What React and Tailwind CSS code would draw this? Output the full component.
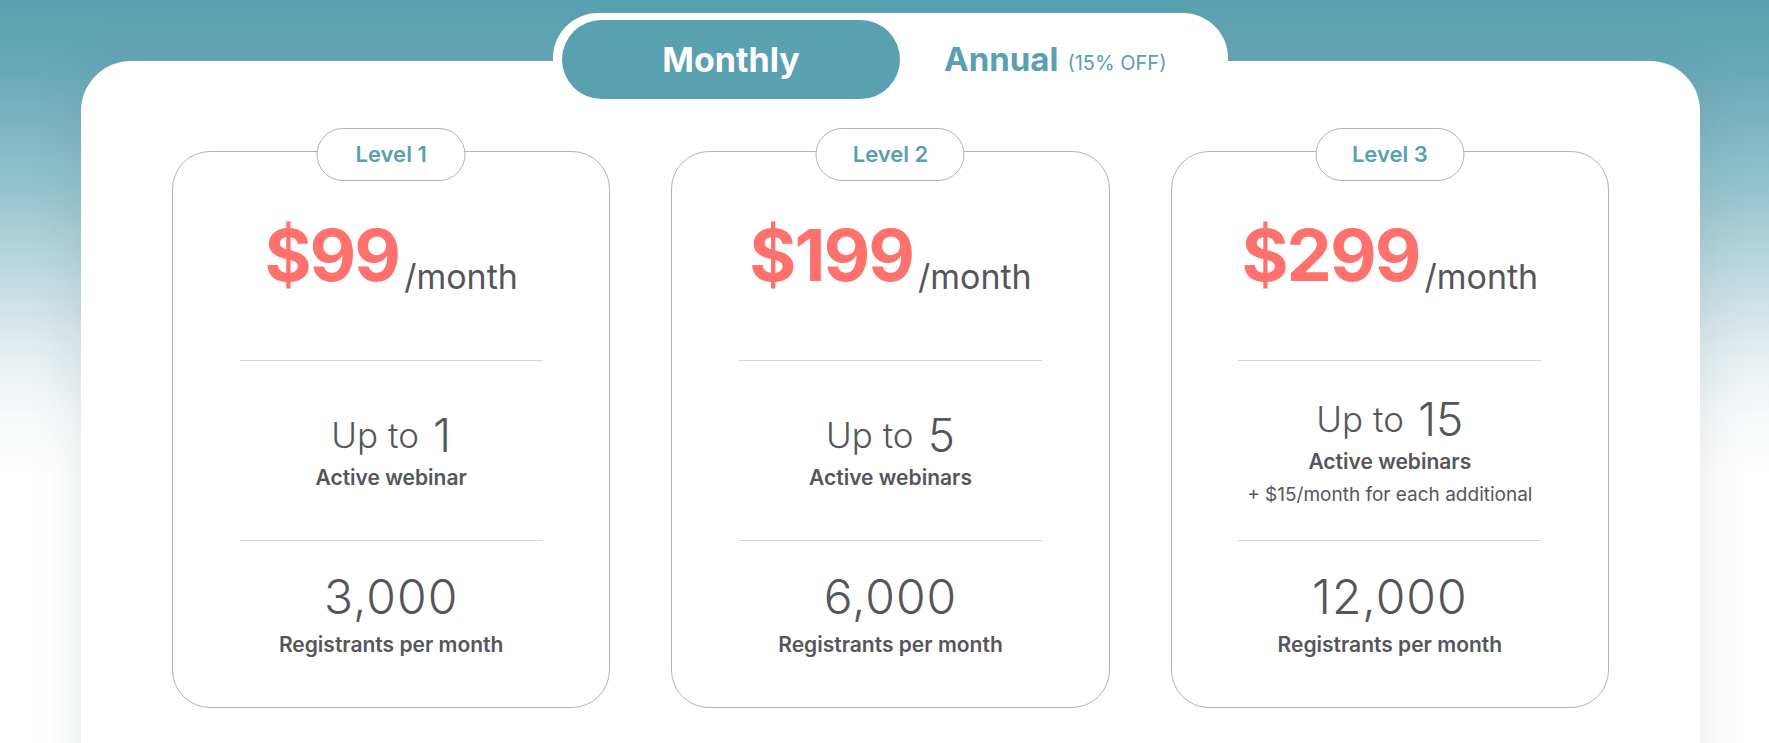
import React from 'react'

const plans = [
    { level: 'Level 1', price: '$99', count: '1', label: 'Active webinar', registrants: '3,000' },
    { level: 'Level 2', price: '$199', count: '5', label: 'Active webinars', registrants: '6,000' },
    { level: 'Level 3', price: '$299', count: '15', label: 'Active webinars', extra: '+ $15/month for each additional', registrants: '12,000' },
]

const PlanCard = ({ plan }) => {
    return (
        <div className='relative h-[557px] rounded-[38px] border border-[#b2b2b6] flex flex-col items-center'>
            <div className='absolute -top-[24px] left-1/2 -translate-x-1/2 w-[149px] h-[53px] rounded-full border border-[#b2b2b6] bg-white flex items-center justify-center text-[22px] font-semibold text-[#59a0b0]'>
                {plan.level}
            </div>

            <div className='h-[208px] flex items-center justify-center'>
                <div className='leading-none whitespace-nowrap'>
                    <span className='text-[72px] font-bold tracking-[-2px] text-[#ff716c]'>{plan.price}</span>
                    <span className='ml-[5px] text-[34px] text-[#55565c] align-[-8px]'>/month</span>
                </div>
            </div>

            <div className='w-[303px] h-px bg-[#d6d4d8]' />

            <div className='h-[179px] flex flex-col items-center justify-center text-[#55565c]'>
                <div className='leading-none text-[35px] font-light whitespace-nowrap -mt-[2px]'>
                    Up to
                    <span className='ml-[14px] text-[46px] align-[-4px]'>{plan.count}</span>
                </div>
                <div className='mt-[9px] text-[21px] font-semibold leading-none'>{plan.label}</div>
                {plan.extra && (
                    <div className='mt-[13px] text-[19px] leading-none'>{plan.extra}</div>
                )}
            </div>

            <div className='w-[303px] h-px bg-[#d6d4d8]' />

            <div className='pt-[32px] flex flex-col items-center text-[#55565c]'>
                <div className='text-[48px] font-light tracking-[1px] leading-none'>{plan.registrants}</div>
                <div className='mt-[13px] text-[21px] font-semibold leading-none'>Registrants per month</div>
            </div>
        </div>
    )
}

const App = () => {
    return (
        <div className="h-[743px] overflow-hidden pt-[13px] font-[Inter,sans-serif] bg-[linear-gradient(180deg,#589fb0_0%,#6aaab8_10%,#93c3cd_25%,#c4dce2_38%,#e6eff1_48%,#f7f9fa_56%,#ffffff_64%)]">
            {/* billing toggle tab */}
            <div className='relative z-10 ml-[553px] w-[675px] h-[48px] bg-white rounded-t-[45px] flex pl-[9px] pt-[7px]'>
                <button className='w-[338px] h-[79px] shrink-0 rounded-full bg-[#59a0b0] flex items-center justify-center text-white text-[34px] font-bold'>
                    Monthly
                </button>
                <button className='h-[79px] pl-[44px] flex items-center text-[#59a0b0] whitespace-nowrap'>
                    <span className='text-[33px] font-bold'>Annual</span>
                    <span className='ml-[9px] text-[20px] mt-[6px]'>(15% OFF)</span>
                </button>
            </div>

            <div className='ml-[81px] w-[1619px] h-[760px] bg-white rounded-t-[50px] shadow-[0_0_50px_rgba(70,90,100,0.14)] pt-[90px] px-[91px]'>
                <div className='grid grid-cols-3 gap-[61px]'>
                    {plans.map((plan) => (
                        <PlanCard key={plan.level} plan={plan} />
                    ))}
                </div>
            </div>
        </div>
    )
}

export default App
